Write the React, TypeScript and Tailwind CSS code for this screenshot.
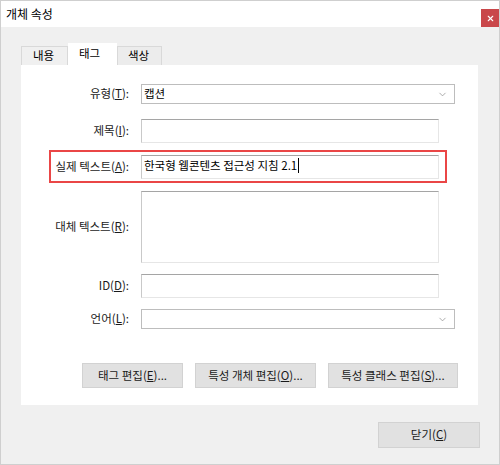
import { ChevronDown, X } from 'lucide-react';

const FONT = { fontFamily: '"Noto Sans CJK KR", "Noto Sans", sans-serif' };

function Label({ text, mn, rest = '):' }: { text: string; mn: string; rest?: string }) {
  return (
    <span className="text-[11.5px] text-[#1a1a1a] leading-none whitespace-nowrap">
      {text}(<span className="underline">{mn}</span>{rest}
    </span>
  );
}

function Row({ label, mn, children, className = '' }: { label: string; mn: string; children: React.ReactNode; className?: string }) {
  return (
    <div className={`flex items-center ${className}`}>
      <div className="w-[109px] flex justify-end pr-[1px]">
        <Label text={label} mn={mn} />
      </div>
      <div className="ml-[11px]">{children}</div>
    </div>
  );
}

function TextBox({ h = 'h-[24px]', children }: { h?: string; children?: React.ReactNode }) {
  return (
    <div
      className={`w-[298px] ${h} bg-white border border-t-[#a5a5a5] border-l-[#c9c9c9] border-r-[#e6e6e6] border-b-[#e6e6e6] flex items-start px-[2px] pt-[3px]`}
    >
      {children}
    </div>
  );
}

function Select({ value = '' }: { value?: string }) {
  return (
    <div className="w-[314px] h-[20px] bg-white border border-[#bdbdbd] flex items-center justify-between pl-[2px] pr-[6px]">
      <span className="text-[11.5px] text-black leading-none">{value}</span>
      <ChevronDown size={11} strokeWidth={1.5} className="text-[#888]" />
    </div>
  );
}

function Button({ label, mn, suffix = ')...', w }: { label: string; mn: string; suffix?: string; w: string }) {
  return (
    <div className={`${w} h-[25px] bg-[#e1e1e1] border border-[#d2d2d2] flex items-center justify-center`}>
      <span className="text-[11.5px] text-[#1a1a1a] leading-none whitespace-nowrap">
        {label}(<span className="underline">{mn}</span>{suffix}
      </span>
    </div>
  );
}

export default function App() {
  return (
    <div style={FONT} className="w-[500px] h-[465px] bg-[#f0f0f0] border border-[#cfcfcf] flex flex-col">
      {/* Title bar */}
      <div className="h-[26px] bg-white flex items-center justify-between shrink-0">
        <span className="pl-[5px] text-[12px] text-black leading-none">개체 속성</span>
        <div className="w-[18px] h-[18px] mt-[8px] bg-[#c9474a] flex items-center justify-center self-start -mt-0">
          <X size={9} strokeWidth={3} className="text-white" />
        </div>
      </div>

      {/* Tabs */}
      <div className="flex items-end ml-[20px] mt-[16px] h-[22px]">
        <div className="w-[47px] h-[19px] bg-[#f0f0f0] border border-b-0 border-[#d9d9d9] flex items-center justify-center text-[11.5px] leading-none pr-[2px]">
          내용
        </div>
        <div className="w-[49px] h-[22px] bg-white flex items-start justify-center pt-[5px] text-[11.5px] leading-none pr-[6px]">
          태그
        </div>
        <div className="w-[45px] h-[19px] bg-[#ececec] border border-b-0 border-[#d9d9d9] flex items-center justify-center text-[11.5px] leading-none pr-[2px]">
          색상
        </div>
      </div>

      {/* Panel */}
      <div className="ml-[20px] w-[457px] h-[340px] bg-white flex flex-col pt-[19px]">
        <Row label="유형" mn="T">
          <Select value="캡션" />
        </Row>
        <Row label="제목" mn="I" className="mt-[15px]">
          <TextBox />
        </Row>
        <div className="relative mt-[12px]">
          <div className="absolute left-[28px] top-[-5px] w-[398px] h-[33px] border-2 border-[#ea4646]" />
          <Row label="실제 텍스트" mn="A">
            <TextBox>
              <span className="text-[11.5px] text-black leading-none mt-[1px]">한국형 웹콘텐츠 접근성 지침 2.1</span>
              <span className="w-[1px] h-[15px] bg-black ml-[1px] -mt-[1px]" />
            </TextBox>
          </Row>
        </div>
        <Row label="대체 텍스트" mn="R" className="mt-[12px]">
          <TextBox h="h-[72px]" />
        </Row>
        <Row label="ID" mn="D" className="mt-[11px]">
          <TextBox />
        </Row>
        <Row label="언어" mn="L" className="mt-[11px]">
          <Select />
        </Row>
        <div className="flex ml-[61px] mt-[34px] gap-[12px]">
          <Button label="태그 편집" mn="E" w="w-[101px]" />
          <Button label="특성 개체 편집" mn="O" w="w-[121px]" />
          <Button label="특성 클래스 편집" mn="S" w="w-[130px]" />
        </div>
      </div>

      {/* Footer */}
      <div className="flex justify-end pr-[19px] mt-[17px]">
        <div className="w-[102px] h-[26px] bg-[#e1e1e1] border border-[#d2d2d2] flex items-center justify-center">
          <span className="text-[11.5px] text-[#1a1a1a] leading-none">
            닫기(<span className="underline">C</span>)
          </span>
        </div>
      </div>
    </div>
  );
}
